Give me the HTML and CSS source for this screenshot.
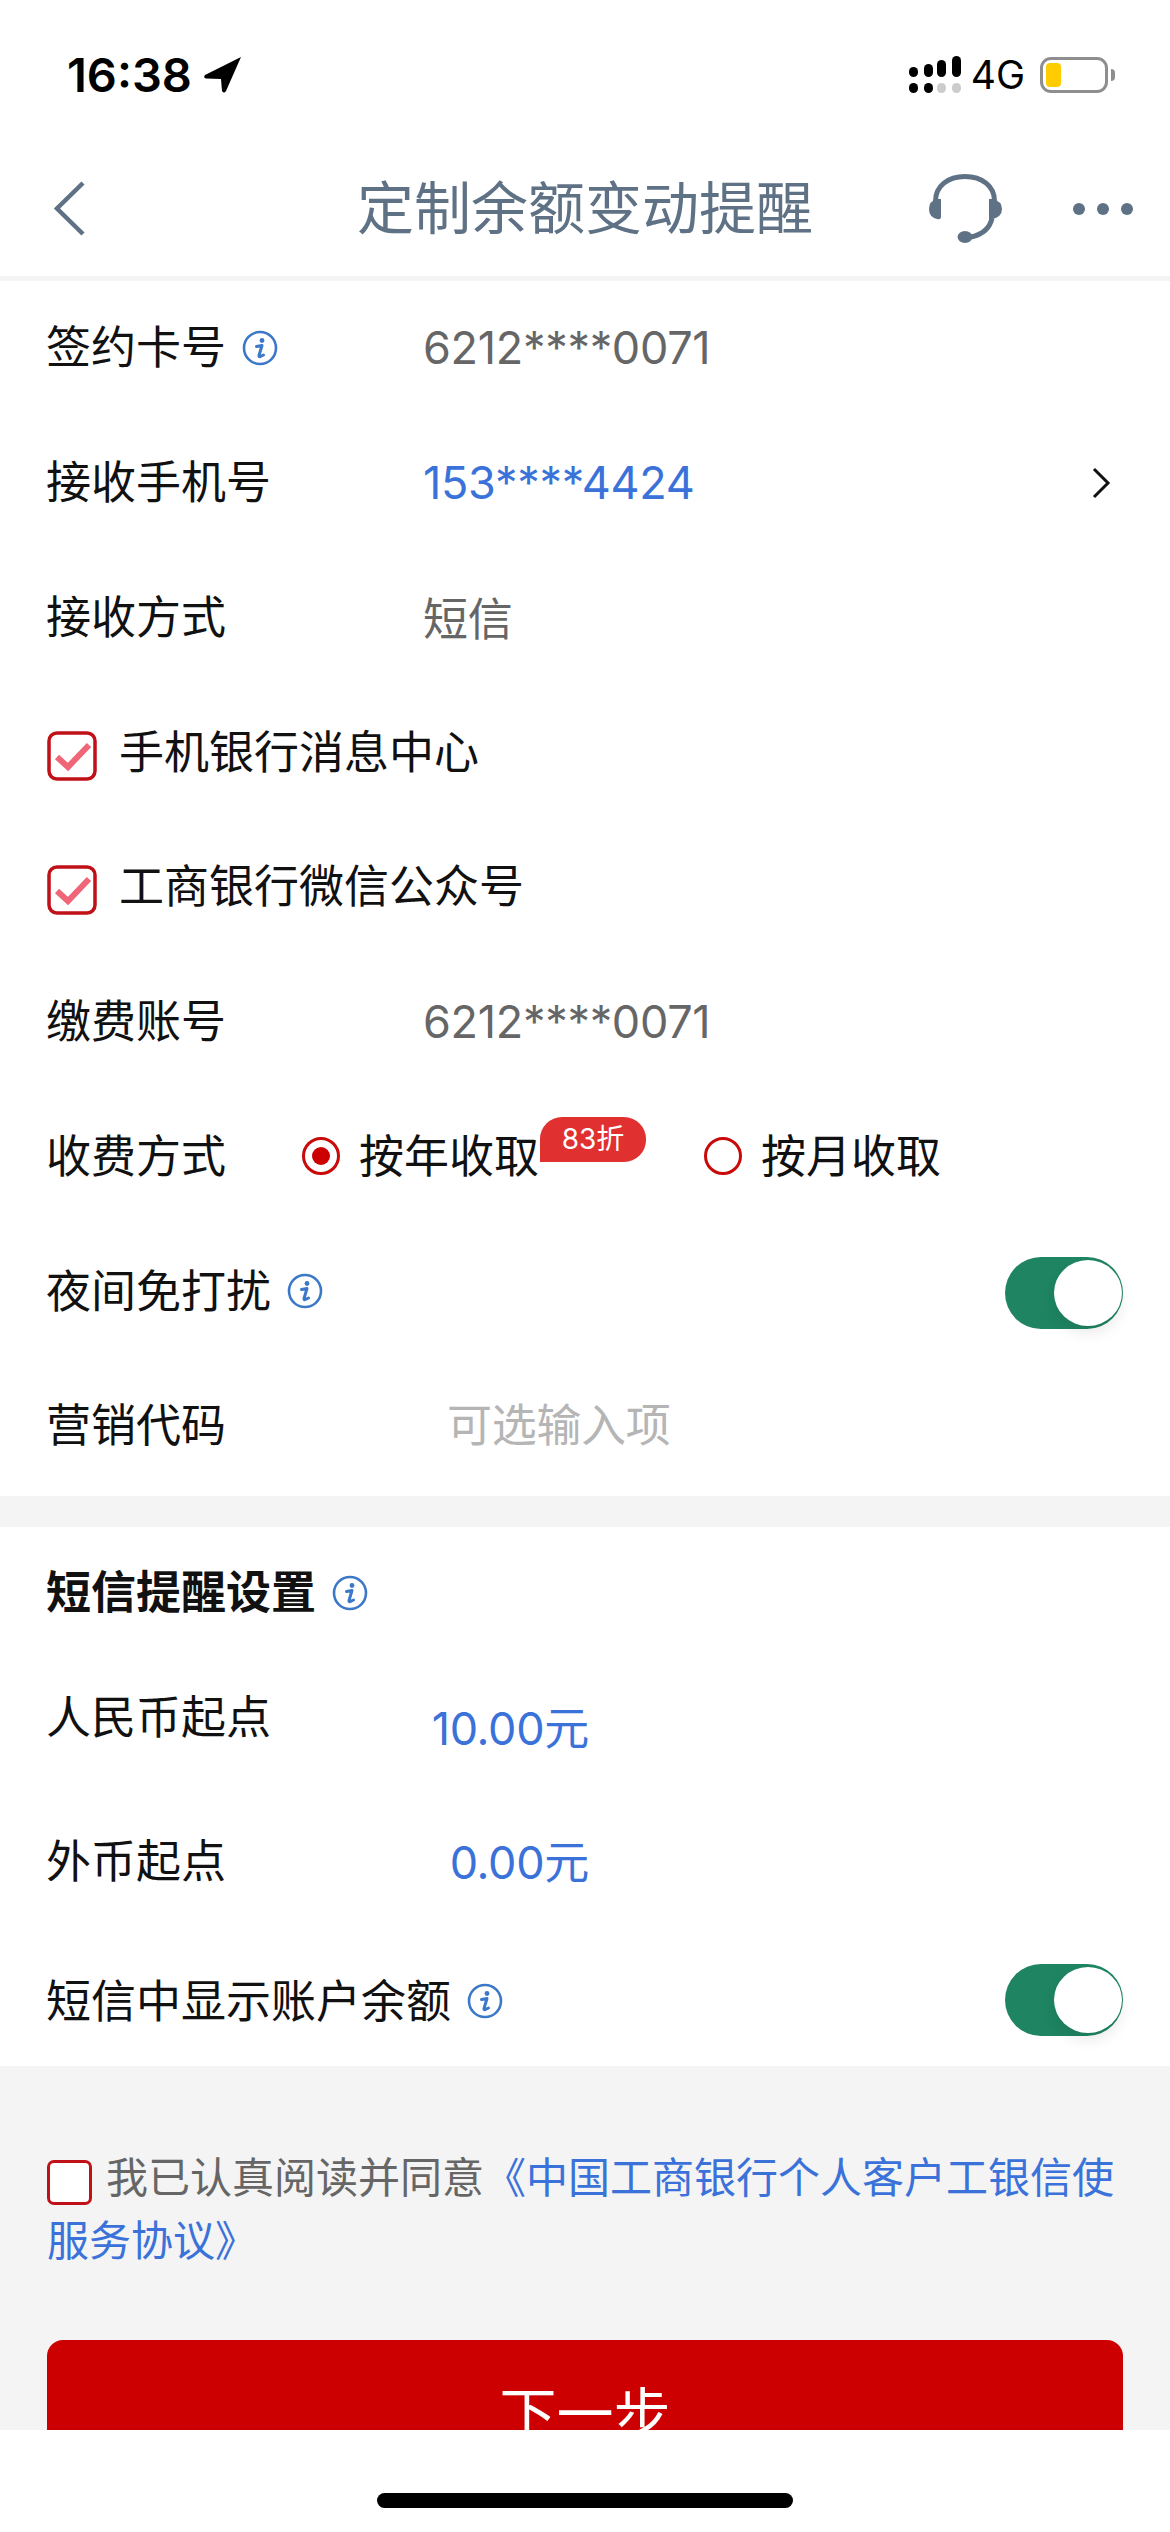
FILE: index.html
```html
<!DOCTYPE html>
<html lang="zh-CN">
<head>
    <meta charset="UTF-8">
    <meta name="viewport" content="width=device-width, initial-scale=1.0">
    <title>定制余额变动提醒</title>
    <link rel="stylesheet" href="styles.css">
</head>
<body>
    <svg class="icon-defs" width="0" height="0">
        <symbol id="info" viewBox="0 0 36 36">
            <circle cx="18" cy="18" r="16" fill="none" stroke="#3c78c8" stroke-width="2.6"/>
            <circle cx="20" cy="10.5" r="2.4" fill="#3c78c8"/>
            <path d="M14.5 16.5 L20 15.5 L17 25.5 Q16.8 27 18 26.6 L21.5 25" fill="none" stroke="#3c78c8" stroke-width="3" stroke-linejoin="round" stroke-linecap="round"/>
        </symbol>
        <symbol id="check" viewBox="0 0 50 50">
            <rect x="2" y="2" width="46" height="46" rx="8" fill="#fff" stroke="#c01018" stroke-width="3.5"/>
            <path d="M10 26 L21 36 L42 14" fill="none" stroke="#ee6677" stroke-width="6"/>
        </symbol>
    </svg>

    <div class="status-bar">
        <div class="status-left">
            <span class="time">16:38</span>
            <svg class="location" width="38" height="36" viewBox="0 0 38 36"><path d="M37 0 L1 18 Q-1 21 2 21.500 L17 22 L18 34 Q20 37 22 34 Z" fill="#000"/></svg>
        </div>
        <div class="status-right">
            <svg class="signal" width="56" height="38" viewBox="0 0 56 38">
                <rect x="0" y="11" width="9" height="10" rx="4.5"/>
                <rect x="15" y="8" width="9" height="13" rx="4.5"/>
                <rect x="28" y="4" width="9" height="17" rx="4.5"/>
                <rect x="43" y="0" width="9" height="21" rx="4.5"/>
                <rect x="0" y="27" width="9" height="10" rx="4.5"/>
                <rect x="15" y="27" width="9" height="10" rx="4.5"/>
                <rect x="28" y="27" width="9" height="10" rx="4.5" fill="#ccc"/>
                <rect x="43" y="27" width="9" height="10" rx="4.5" fill="#ccc"/>
            </svg>
            <span class="net">4G</span>
            <div class="battery"><div class="battery-fill"></div></div>
            <div class="battery-nub"></div>
        </div>
    </div>

    <div class="nav-bar">
        <svg class="nav-back" width="33" height="55" viewBox="0 0 33 55"><path d="M30 2 L4 27.5 L30 53" fill="none" stroke="#5f7285" stroke-width="4.5"/></svg>
        <div class="nav-title">定制余额变动提醒</div>
        <svg class="nav-headset" width="74" height="70" viewBox="0 0 74 70">
            <path d="M6.5 27 C6.5 12 19 2.5 36 2.5 C53 2.5 65.5 12 65.5 27" fill="none" stroke="#5f7285" stroke-width="5"/>
            <path d="M12 25 L12 43 Q12 46 8 45 Q0 43 0 35 Q0 27 8 25 Z" fill="#5f7285"/>
            <path d="M60 25 L60 45 L63 45 Q73 43 73 35 Q73 27 63 25 Z" fill="#5f7285"/>
            <path d="M63 44 Q60 59 42 63" fill="none" stroke="#5f7285" stroke-width="5"/>
            <ellipse cx="36" cy="63" rx="7.5" ry="6" fill="#5f7285"/>
        </svg>
        <div class="nav-more"><i></i><i></i><i></i></div>
    </div>

    <div class="content">
        <div class="section">
            <div class="row">
                <div class="label">签约卡号<svg class="info"><use href="#info"/></svg></div>
                <div class="value">6212****0071</div>
            </div>
            <div class="row">
                <div class="label">接收手机号</div>
                <div class="value blue">153****4424</div>
                <svg class="chevron" width="20" height="32" viewBox="0 0 20 32"><path d="M3 2 L17 16 L3 30" fill="none" stroke="#111" stroke-width="3"/></svg>
            </div>
            <div class="row">
                <div class="label">接收方式</div>
                <div class="value">短信</div>
            </div>
            <div class="row check-row">
                <svg class="checkbox"><use href="#check"/></svg>手机银行消息中心
            </div>
            <div class="row check-row">
                <svg class="checkbox"><use href="#check"/></svg>工商银行微信公众号
            </div>
            <div class="row">
                <div class="label">缴费账号</div>
                <div class="value">6212****0071</div>
            </div>
            <div class="row">
                <div class="label short">收费方式</div>
                <div class="radio-item">
                    <span class="radio on"></span>按年收取
                    <span class="badge">83折</span>
                </div>
                <div class="radio-item second">
                    <span class="radio"></span>按月收取
                </div>
            </div>
            <div class="row">
                <div class="label">夜间免打扰<svg class="info"><use href="#info"/></svg></div>
                <div class="toggle"><span class="knob"></span></div>
            </div>
            <div class="row">
                <div class="label">营销代码</div>
                <div class="value placeholder">可选输入项</div>
            </div>
        </div>

        <div class="section sms">
            <div class="sms-title">短信提醒设置<svg class="info"><use href="#info"/></svg></div>
            <div class="sms-row">
                <div class="label">人民币起点</div>
                <div class="amount first">10.00元</div>
            </div>
            <div class="sms-row next">
                <div class="label">外币起点</div>
                <div class="amount">0.00元</div>
            </div>
            <div class="sms-row last">
                <div class="label wide">短信中显示账户余额<svg class="info"><use href="#info"/></svg></div>
                <div class="toggle"><span class="knob"></span></div>
            </div>
        </div>

        <div class="agree">
            <span class="agree-box"></span>我已认真阅读并同意<span class="link">《中国工商银行个人客户工银信使服务协议》</span>
        </div>
        <div class="next-btn">下一步</div>
    </div>

    <div class="home-area"><div class="home-bar"></div></div>
</body>
</html>
```

FILE: styles.css
```css
* {
    box-sizing: border-box;
}
html, body {
    margin: 0;
    padding: 0;
}
body {
    width: 1170px;
    height: 2532px;
    display: flex;
    flex-direction: column;
    overflow: hidden;
    background-color: #fff;
    color: #111;
    font-family: Inter, "Noto Sans CJK SC", sans-serif;
    font-size: 45px;
}
.icon-defs {
    position: absolute;
}

/* status bar */
.status-bar {
    height: 150px;
    display: flex;
    justify-content: space-between;
    align-items: center;
    padding: 0 55px 0 67px;
    flex-shrink: 0;
}
.status-left {
    display: flex;
    align-items: center;
    gap: 12px;
}
.time {
    font-size: 47px;
    font-weight: 600;
    color: #000;
    line-height: 50px;
}
.status-right {
    display: flex;
    align-items: center;
}
.signal {
    margin-right: 6px;
}
.net {
    font-size: 39px;
    color: #000;
    line-height: 40px;
    margin-right: 15px;
}
.battery {
    width: 68px;
    height: 36px;
    border: 3.5px solid #8e8e8e;
    border-radius: 11px;
    padding: 3px;
}
.battery-fill {
    width: 15px;
    height: 100%;
    background-color: #ffcc00;
    border-radius: 4px;
}
.battery-nub {
    width: 4px;
    height: 12px;
    margin-left: 3px;
    background-color: #8e8e8e;
    border-radius: 0 4px 4px 0;
}

/* nav */
.nav-bar {
    height: 131px;
    flex-shrink: 0;
    display: flex;
    align-items: center;
    padding: 0 37px 9px 53px;
    border-bottom: 5px solid #f4f4f4;
}
.nav-title {
    width: 456px;
    margin-left: 271px;
    font-size: 57px;
    line-height: 70px;
    white-space: nowrap;
    color: #5f7285;
}
.nav-headset {
    margin-left: 116px;
    margin-top: 1px;
}
.nav-more {
    margin-left: 70px;
    display: flex;
    gap: 12px;
}
.nav-more i {
    width: 12px;
    height: 12px;
    border-radius: 50%;
    background-color: #5f7285;
}

/* rows */
.content {
    flex: 1;
    overflow: hidden;
    background-color: #f4f4f4;
}
.section {
    background-color: #fff;
    padding-bottom: 2px;
}
.row {
    height: 134.75px;
    display: flex;
    align-items: center;
    padding: 0 47px 7px 46px;
    white-space: nowrap;
}
.label {
    width: 377px;
    display: flex;
    align-items: center;
}
.label.short {
    width: 256px;
}
.label.wide {
    width: auto;
    flex: 1;
}
.info {
    width: 36px;
    height: 36px;
    margin-left: 16px;
    margin-top: 6px;
}
.value {
    color: #666;
    padding-top: 5px;
    letter-spacing: -0.3px;
}
.value.blue {
    color: #3b72d9;
}
.value.placeholder {
    color: #b5b5b5;
    margin-left: 24px;
    padding-top: 0;
}
.chevron {
    margin-left: auto;
    margin-right: 12px;
    margin-top: 6px;
}
.check-row {
    gap: 22px;
}
.checkbox {
    width: 50px;
    height: 50px;
    margin-top: 13px;
    margin-left: 1px;
}
.radio-item {
    position: relative;
    display: flex;
    align-items: center;
    gap: 19px;
}
.radio-item.second {
    margin-left: 165px;
}
.radio {
    width: 38px;
    height: 38px;
    border: 3.5px solid #c80a0a;
    border-radius: 50%;
    display: flex;
    align-items: center;
    justify-content: center;
    margin-top: 6px;
}
.radio.on::after {
    content: "";
    width: 18px;
    height: 18px;
    border-radius: 50%;
    background-color: #cc0000;
}
.badge {
    position: absolute;
    left: 238px;
    top: -4px;
    width: 106px;
    height: 45px;
    background-color: #e03030;
    color: #fff;
    font-size: 28px;
    line-height: 44px;
    text-align: center;
    border-radius: 22px 22px 22px 0;
}
.toggle {
    width: 118px;
    height: 72px;
    margin-left: auto;
    margin-top: 10px;
    background-color: #1e8462;
    border-radius: 36px;
    padding: 3px 1px 3px 49px;
}
.knob {
    display: block;
    width: 68px;
    height: 66px;
    background-color: #fff;
    border-radius: 50%;
    box-shadow: 0 8px 14px rgba(0, 0, 0, 0.08);
}

/* sms section */
.sms {
    margin-top: 31px;
    padding: 7px 47px 0 46px;
}
.sms-title {
    height: 112px;
    display: flex;
    align-items: center;
    font-weight: 700;
}
.sms-row {
    height: 137px;
    display: flex;
    align-items: center;
}
.sms-row.next {
    margin-top: 7px;
}
.sms-row.last {
    height: 135px;
    margin-top: 4px;
}
.sms-row .toggle {
    margin-top: 3px;
}
.amount {
    width: 166px;
    text-align: right;
    color: #3b72d9;
    padding-top: 2px;
    letter-spacing: -0.3px;
}
.amount.first {
    padding-top: 22px;
}

/* agreement + button */
.agree {
    padding: 80px 47px 0;
    font-size: 42px;
    line-height: 63px;
    color: #666;
}
.agree-box {
    display: inline-block;
    width: 45px;
    height: 45px;
    margin-right: 14px;
    vertical-align: -12px;
    background-color: #fff;
    border: 3.5px solid #c01018;
    border-radius: 7px;
}
.link {
    color: #3b72d9;
}
.next-btn {
    height: 150px;
    margin: 68px 47px 0;
    background-color: #cc0000;
    color: #fff;
    font-size: 57px;
    line-height: 150px;
    text-align: center;
    border-radius: 16px;
}

/* bottom */
.home-area {
    height: 102px;
    flex-shrink: 0;
    background-color: #fff;
    padding-top: 63px;
}
.home-bar {
    width: 416px;
    height: 15px;
    margin: 0 auto;
    background-color: #000;
    border-radius: 8px;
}
```
